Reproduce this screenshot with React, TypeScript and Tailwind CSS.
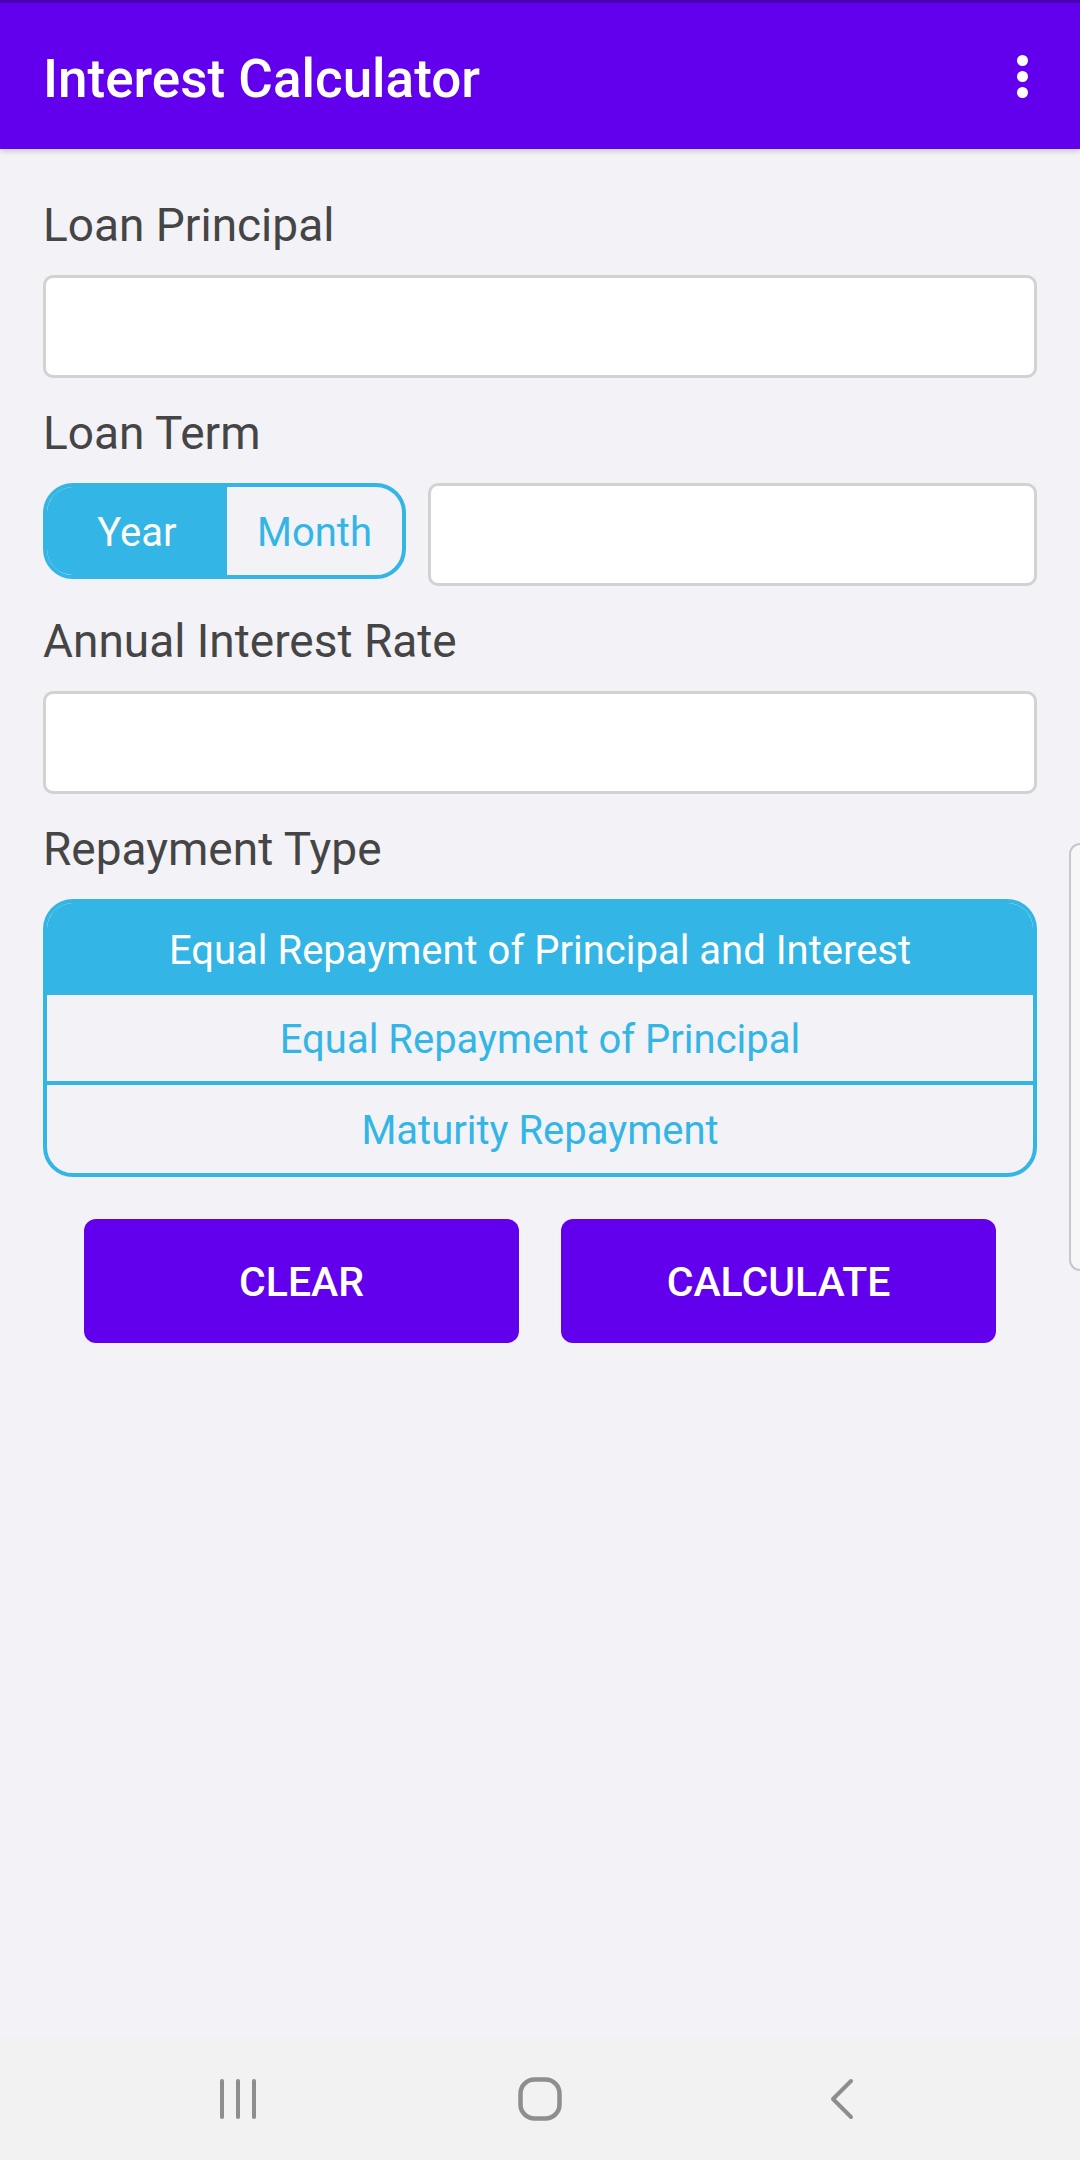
import React from "react";

function Label({ children }: { children: React.ReactNode }) {
  return (
    <div className="text-[46px] leading-[54px] text-[#454545]">{children}</div>
  );
}

function Input({ className = "" }: { className?: string }) {
  return (
    <div
      className={
        "h-[103px] bg-white border-[3px] border-[#d2d2d2] rounded-[10px] " +
        className
      }
    />
  );
}

export default function App() {
  return (
    <div className="relative w-[1080px] h-[2160px] bg-[#f2f2f7] flex flex-col font-['Roboto',sans-serif] overflow-hidden">
      {/* App bar */}
      <header className="relative z-10 h-[149px] bg-[#6200ee] border-t-[3px] border-[#4a00b4] flex items-center justify-between pl-[43px] pr-[52px] shadow-[0_2px_6px_rgba(0,0,0,0.18)]">
        <div className="mt-[6px] text-[53px] leading-[62px] font-medium text-white">
          Interest Calculator
        </div>
        <div className="flex flex-col items-center gap-[5px]">
          <span className="block w-[11px] h-[11px] rounded-full bg-white" />
          <span className="block w-[11px] h-[11px] rounded-full bg-white" />
          <span className="block w-[11px] h-[11px] rounded-full bg-white" />
        </div>
      </header>

      {/* Content */}
      <main className="flex-1 px-[43px] pt-[49px] flex flex-col">
        <Label>Loan Principal</Label>
        <Input className="mt-[23px]" />

        <div className="mt-[28px]">
          <Label>Loan Term</Label>
        </div>
        <div className="mt-[23px] flex items-start gap-[22px]">
          <div className="w-[363px] h-[96px] border-[4px] border-[#33b5e5] rounded-[30px] overflow-hidden flex">
            <div className="w-[180px] h-full pt-[4px] bg-[#33b5e5] flex items-center justify-center text-[40px] text-white">
              Year
            </div>
            <div className="flex-1 h-full pt-[4px] flex items-center justify-center text-[40px] text-[#33b5e5]">
              Month
            </div>
          </div>
          <Input className="flex-1" />
        </div>

        <div className="mt-[28px]">
          <Label>Annual Interest Rate</Label>
        </div>
        <Input className="mt-[23px]" />

        <div className="mt-[28px]">
          <Label>Repayment Type</Label>
        </div>
        <div className="mt-[23px] border-[4px] border-[#33b5e5] rounded-[30px] overflow-hidden flex flex-col">
          <div className="h-[92px] pt-[3px] bg-[#33b5e5] flex items-center justify-center text-[40px] text-white">
            Equal Repayment of Principal and Interest
          </div>
          <div className="h-[86px] pt-[4px] flex items-center justify-center text-[40px] text-[#33b5e5]">
            Equal Repayment of Principal
          </div>
          <div className="h-[92px] pt-[3px] border-t-[4px] border-[#33b5e5] flex items-center justify-center text-[40px] text-[#33b5e5]">
            Maturity Repayment
          </div>
        </div>

        <div className="mt-[42px] flex justify-center gap-[42px]">
          <button className="w-[435px] h-[124px] pt-[4px] rounded-[12px] bg-[#6200ee] text-white text-[41px] font-medium">
            CLEAR
          </button>
          <button className="w-[435px] h-[124px] pt-[4px] rounded-[12px] bg-[#6200ee] text-white text-[41px] font-medium">
            CALCULATE
          </button>
        </div>
      </main>

      {/* Edge panel handle */}
      <div className="absolute right-0 top-[843px] w-[11px] h-[428px] bg-[#f7f7f9] border-[2px] border-r-0 border-[#c8c8c8] rounded-l-[14px]" />

      {/* Navigation bar */}
      <nav className="h-[123px] bg-[#f2f2f2] flex items-center justify-center">
        <div className="w-[302px] flex justify-center">
          <svg width="40" height="42" viewBox="0 0 40 42">
            <line x1="4" y1="3" x2="4" y2="39" stroke="#8e8e8e" strokeWidth="4" strokeLinecap="round" />
            <line x1="20" y1="3" x2="20" y2="39" stroke="#8e8e8e" strokeWidth="4" strokeLinecap="round" />
            <line x1="36" y1="3" x2="36" y2="39" stroke="#8e8e8e" strokeWidth="4" strokeLinecap="round" />
          </svg>
        </div>
        <div className="w-[302px] flex justify-center">
          <svg width="44" height="44" viewBox="0 0 44 44">
            <rect x="2.5" y="2.5" width="39" height="39" rx="14" fill="none" stroke="#8e8e8e" strokeWidth="4.5" />
          </svg>
        </div>
        <div className="w-[302px] flex justify-center">
          <svg width="26" height="42" viewBox="0 0 26 42">
            <polyline points="22,3 4,21 22,39" fill="none" stroke="#8e8e8e" strokeWidth="4" strokeLinecap="round" strokeLinejoin="round" />
          </svg>
        </div>
      </nav>
    </div>
  );
}
